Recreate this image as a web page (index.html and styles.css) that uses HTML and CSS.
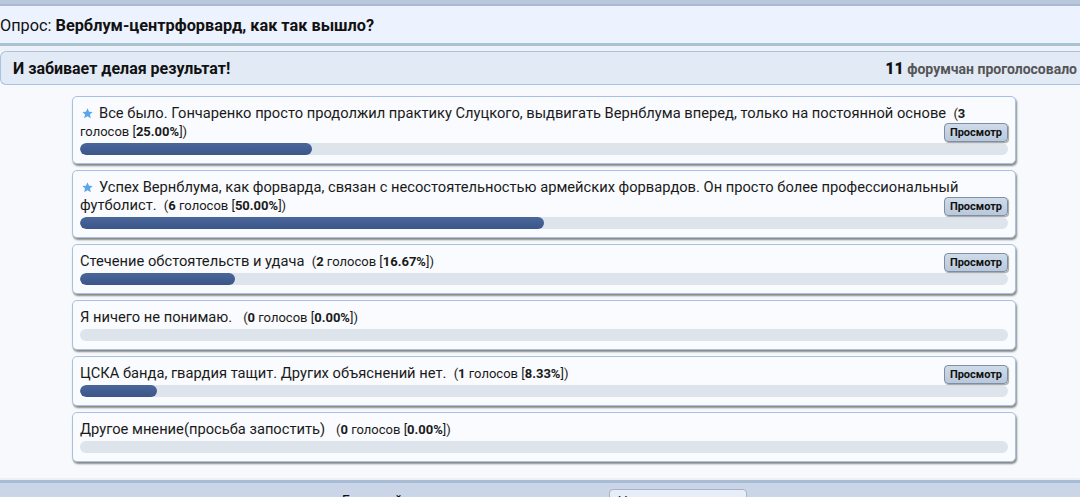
FILE: index.html
```html
<!DOCTYPE html>
<html lang="ru">
<head>
<meta charset="utf-8">
<title>Опрос</title>
<link rel="stylesheet" href="styles.css">
</head>
<body>
<div class="topstrip"></div>
<div class="poll-title">Опрос: <b>Верблум-центрфорвард, как так вышло?</b></div>
<div class="spacer"></div>
<div class="question">
  <span class="q-text">И забивает делая результат!</span>
  <span class="q-count"><b class="num">11</b> форумчан проголосовало</span>
</div>
<div class="choices">
  <div class="choice">
    <div class="c-text"><svg class="star" viewBox="0 0 10 10"><path d="M5 0.3 L6.4 3.3 L9.7 3.6 L7.2 5.8 L8 9.3 L5 7.5 L2 9.3 L2.8 5.8 L0.3 3.6 L3.6 3.3 Z"/></svg>Все было. Гончаренко просто продолжил практику Слуцкого, выдвигать Вернблума вперед, только на постоянной основе&nbsp; <span class="votes">(<b>3</b> голосов [<b>25.00%</b>])</span><button class="view">Просмотр</button></div>
    <div class="bar"><div class="fill" style="width:25%"></div></div>
  </div>
  <div class="choice">
    <div class="c-text"><svg class="star" viewBox="0 0 10 10"><path d="M5 0.3 L6.4 3.3 L9.7 3.6 L7.2 5.8 L8 9.3 L5 7.5 L2 9.3 L2.8 5.8 L0.3 3.6 L3.6 3.3 Z"/></svg>Успех Вернблума, как форварда, связан с несостоятельностью армейских форвардов. Он просто более профессиональный футболист.&nbsp; <span class="votes">(<b>6</b> голосов [<b>50.00%</b>])</span><button class="view">Просмотр</button></div>
    <div class="bar"><div class="fill" style="width:50%"></div></div>
  </div>
  <div class="choice">
    <div class="c-text">Стечение обстоятельств и удача&nbsp; <span class="votes">(<b>2</b> голосов [<b>16.67%</b>])</span><button class="view">Просмотр</button></div>
    <div class="bar"><div class="fill" style="width:16.67%"></div></div>
  </div>
  <div class="choice">
    <div class="c-text">Я ничего не понимаю. &nbsp;&nbsp;<span class="votes">(<b>0</b> голосов [<b>0.00%</b>])</span></div>
    <div class="bar"><div class="fill" style="width:0%"></div></div>
  </div>
  <div class="choice">
    <div class="c-text">ЦСКА банда, гвардия тащит. Других объяснений нет.&nbsp; <span class="votes">(<b>1</b> голосов [<b>8.33%</b>])</span><button class="view">Просмотр</button></div>
    <div class="bar"><div class="fill" style="width:8.33%"></div></div>
  </div>
  <div class="choice">
    <div class="c-text">Другое мнение(просьба запостить) &nbsp;&nbsp;<span class="votes">(<b>0</b> голосов [<b>0.00%</b>])</span></div>
    <div class="bar"><div class="fill" style="width:0%"></div></div>
  </div>
</div>
<div class="footer-line"></div>
<div class="footer">
  <span class="f-text">Быстрый ответ</span>
  <span class="f-box">Новая тема</span>
</div>
</body>
</html>
```
FILE: styles.css
```css
html, body {
  margin: 0;
  padding: 0;
}
body {
  width: 1080px;
  height: 497px;
  overflow: hidden;
  background: #f7f9fc;
  font-family: Roboto, "Liberation Sans", sans-serif;
  color: #111;
}
.topstrip {
  height: 4px;
  background: #b9c7da;
  border-bottom: 2px solid #a6bad3;
}
.poll-title {
  height: 34px;
  padding-top: 3px;
  line-height: 34px;
  background: #ecf3fe;
  border-bottom: 3px solid #a9c3d6;
  font-size: 16.3px;
  white-space: nowrap;
}
.poll-title b {
  font-weight: 700;
}
.spacer {
  height: 5px;
  background: #eef2f7;
}
.question {
  display: flex;
  justify-content: space-between;
  align-items: center;
  height: 32px;
  background: #e2eaf5;
  border: 1px solid #a9c2e4;
  border-right: none;
  border-radius: 6px 0 0 6px;
  padding: 0 3px 0 12px;
}
.q-text {
  font-size: 16px;
  font-weight: 700;
}
.q-count {
  font-size: 14px;
  font-weight: 700;
  color: #555;
}
.q-count .num {
  font-size: 16px;
  color: #111;
}
.choices {
  display: flex;
  flex-direction: column;
  gap: 6px;
  padding: 11px 0 16px 72px;
}
.choice {
  width: 928px;
  background: #f9fbfe;
  border: 1px solid #a8c0e2;
  border-radius: 5px;
  padding: 7px 7px 8px 7px;
  box-shadow: 1px 2px 2px rgba(0, 0, 0, 0.45);
}
.c-text {
  font-size: 14.7px;
  line-height: 18px;
  color: #1a1a1a;
}
.star {
  width: 11px;
  height: 11px;
  fill: #5aa6ea;
  margin: 0 6px 0 2px;
  vertical-align: -1px;
}
.votes {
  font-size: 13px;
  line-height: 14px;
}
.votes b {
  font-weight: 700;
}
.view {
  float: right;
  height: 19px;
  margin-top: 1px;
  padding: 0 5px;
  font-family: Roboto, "Liberation Sans", sans-serif;
  font-size: 11px;
  font-weight: 700;
  color: #111;
  background: linear-gradient(#cfdbe9, #b9c8da);
  border: 1px solid #7d8ea6;
  border-radius: 4px;
  box-shadow: 1px 1px 1px rgba(0, 0, 0, 0.35);
  line-height: 16px;
}
.bar {
  height: 12px;
  margin-top: 3px;
  border-radius: 6px;
  background: #dde4ec;
  overflow: hidden;
}
.fill {
  height: 100%;
  border-radius: 6px;
  background: linear-gradient(#4a669a, #3b5689);
}
.footer-line {
  height: 2px;
  background: #edf1f7;
}
.footer {
  height: 20px;
  background: #cad6e8;
  border-top: 3px solid #a8bcd6;
  display: flex;
  align-items: flex-start;
  padding-left: 342px;
  font-size: 14px;
}
.f-text {
  margin-top: 10px;
}
.f-box {
  margin-left: 166px;
  margin-top: 6px;
  width: 128px;
  height: 20px;
  padding: 3px 0 0 8px;
  background: #e8eef8;
  border: 1px solid #a7b3c6;
  border-radius: 4px;
  line-height: 18px;
}
```
